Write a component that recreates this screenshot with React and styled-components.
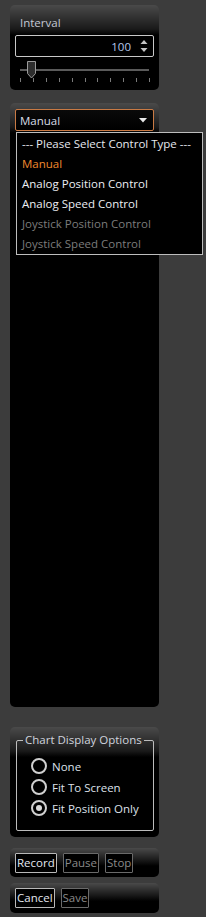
import React from "react";
import styled, { createGlobalStyle } from "styled-components";

const Global = createGlobalStyle`
  html, body { margin: 0; padding: 0; background: #3c3c3c; }
  body { font-family: "Open Sans", "Noto Sans", sans-serif; font-size: 11.5px; }
  * { box-sizing: border-box; }
`;

const Column = styled.div`
  width: 149px;
  margin-left: 10px;
  padding-top: 5px;
  display: flex;
  flex-direction: column;
`;

const Panel = styled.div`
  position: relative;
  height: ${(p) => p.$h}px;
  margin-top: ${(p) => p.$mt || 0}px;
  border-radius: 5px;
  background: linear-gradient(to bottom, #4a4a4a 0px, #1a1a1a ${(p) => p.$fade || 24}px, #000 ${(p) => (p.$fade || 24) + 6}px);
  padding: ${(p) => p.$pad || "5px"};
  display: flex;
  flex-direction: column;
`;

const Label = styled.div`
  color: #c4c8d4;
  font-size: 11.5px;
  line-height: 16px;
  padding: 5px 0 0 5px;
  height: 26px;
`;

const NumberBox = styled.div`
  height: 22px;
  border: 1px solid #c8c8c8;
  border-radius: 2px;
  background: #000;
  display: flex;
  align-items: center;
  justify-content: flex-end;
  padding-right: 5px;
  gap: 9px;
`;

const NumValue = styled.span`
  color: #b4c8ec;
  font-size: 11.5px;
`;

const SliderWrap = styled.div`
  height: 24px;
  margin-top: 4px;
`;

const Select = styled.div`
  position: relative;
  height: 22px;
  border: 1px solid #c97a44;
  border-radius: 2px;
  background: linear-gradient(#0a0a0a, #000);
  display: flex;
  align-items: center;
  justify-content: space-between;
  padding: 0 6px 0 4px;
  color: #d8dce6;
  font-size: 11.5px;
`;

const DropList = styled.ul`
  position: absolute;
  left: 0;
  top: 22px;
  width: 187px;
  margin: 0;
  padding: 1px 0 0;
  list-style: none;
  background: #000;
  border: 1px solid #bdbdbd;
  z-index: 5;
`;

const DropItem = styled.li`
  height: 20px;
  line-height: 20px;
  padding-left: 5px;
  font-size: 11.5px;
  white-space: nowrap;
  color: ${(p) => p.$color};
`;

const Group = styled.fieldset`
  margin: 0;
  min-width: 0;
  border: 1px solid #bcbcbc;
  border-radius: 2px;
  padding: 11px 0 0 5px;
  height: 98px;
  display: flex;
  flex-direction: column;
  gap: 5px;
`;

const Legend = styled.legend`
  color: #d0d4de;
  font-size: 11.5px;
  padding: 0 2px;
  margin-left: 1px;
  line-height: 14px;
  white-space: nowrap;
`;

const RadioRow = styled.label`
  display: flex;
  align-items: center;
  gap: 5px;
  height: 16px;
  margin-left: 9px;
  color: #dde0ea;
  font-size: 11.5px;
  white-space: nowrap;
`;

const Radio = styled.span`
  flex: none;
  width: 16px;
  height: 16px;
  border-radius: 50%;
  border: 2px solid #d0d0d0;
  display: flex;
  align-items: center;
  justify-content: center;
  &::after {
    content: "";
    width: 6px;
    height: 6px;
    border-radius: 50%;
    background: ${(p) => (p.$on ? "#d8d8d8" : "transparent")};
  }
`;

const ButtonRow = styled.div`
  display: flex;
  gap: 6px;
  align-items: center;
  height: 100%;
`;

const Button = styled.button`
  height: 20px;
  padding: 0 1px;
  border: 1px solid ${(p) => (p.$disabled ? "#6a6a6a" : "#b8b8b8")};
  border-radius: 1px;
  background: #000;
  color: ${(p) => (p.$disabled ? "#8a8a8a" : "#e4e8f0")};
  font-family: inherit;
  font-size: 11.5px;
  line-height: 16px;
`;

function Slider() {
  const ticks = Array.from({ length: 11 }, (_, i) => 5 + i * 12.9);
  return (
    <svg width="139" height="24" viewBox="0 0 139 24">
      <rect x="5" y="8" width="129" height="2" fill="#5a5a5a" />
      {ticks.map((x, i) => (
        <rect key={i} x={Math.round(x)} y="17" width="1" height="4" fill="#7a7a7a" />
      ))}
      <path d="M12.5 0.5 h8 v12 l-4 4.5 l-4 -4.5 z" fill="#2e2e2e" stroke="#9a9a9a" strokeWidth="1" />
    </svg>
  );
}

function Spinner() {
  return (
    <svg width="8" height="14" viewBox="0 0 8 14">
      <path d="M0.5 5 L4 1 L7.5 5 Z" fill="#c4c4c4" />
      <path d="M0.5 9 L4 13 L7.5 9 Z" fill="#c4c4c4" />
    </svg>
  );
}

function Caret() {
  return (
    <svg width="8" height="5" viewBox="0 0 8 5">
      <path d="M0 0 H8 L4 4.5 Z" fill="#e8e8e8" />
    </svg>
  );
}

const items = [
  ["--- Please Select Control Type ---", "#e6e8ee"],
  ["Manual", "#f0892e"],
  ["Analog Position Control", "#eceef4"],
  ["Analog Speed Control", "#eceef4"],
  ["Joystick Position Control", "#7c7c7c"],
  ["Joystick Speed Control", "#7c7c7c"],
];

export default function App() {
  return (
    <>
      <Global />
      <Column>
        <Panel $h={85}>
          <Label>Interval</Label>
          <NumberBox>
            <NumValue>100</NumValue>
            <Spinner />
          </NumberBox>
          <SliderWrap>
            <Slider />
          </SliderWrap>
        </Panel>
        <Panel $h={604} $mt={13} $pad="6px 5px">
          <Select>
            <span>Manual</span>
            <Caret />
            <DropList>
              {items.map(([t, c]) => (
                <DropItem key={t} $color={c}>{t}</DropItem>
              ))}
            </DropList>
          </Select>
        </Panel>
        <Panel $h={110} $mt={20} $pad="6px 5px 5px 6px">
          <Group>
            <Legend>Chart Display Options</Legend>
            <RadioRow><Radio />None</RadioRow>
            <RadioRow><Radio />Fit To Screen</RadioRow>
            <RadioRow><Radio $on />Fit Position Only</RadioRow>
          </Group>
        </Panel>
        <Panel $h={29} $mt={11} $fade={12} $pad="0 5px">
          <ButtonRow>
            <Button>Record</Button>
            <Button $disabled>Pause</Button>
            <Button $disabled>Stop</Button>
          </ButtonRow>
        </Panel>
        <Panel $h={30} $mt={6} $fade={12} $pad="0 5px">
          <ButtonRow>
            <Button>Cancel</Button>
            <Button $disabled>Save</Button>
          </ButtonRow>
        </Panel>
      </Column>
    </>
  );
}
